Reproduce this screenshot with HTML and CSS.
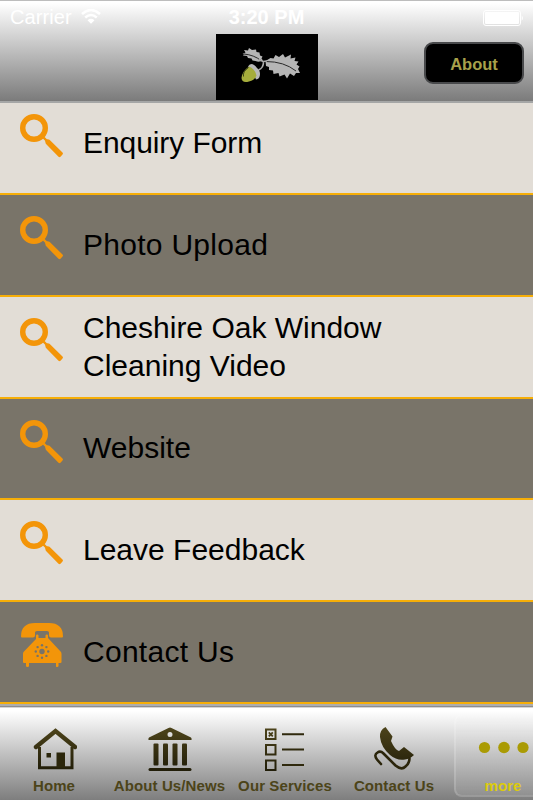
FILE: index.html
```html
<!DOCTYPE html>
<html lang="en">
<head>
<meta charset="utf-8">
<title>More</title>
<link rel="stylesheet" href="styles.css">
</head>
<body>
<svg class="defs" width="0" height="0" aria-hidden="true">
  <symbol id="search" viewBox="0 0 44 44">
    <circle cx="14" cy="14" r="11.3" fill="none" stroke="#f39509" stroke-width="5.4"/>
    <path d="M22 22l6 6" stroke="#f39509" stroke-width="2.4"/>
    <path d="M25.2 27.600q0-2.400 2.600-2.400l1.700.6L42.500 38.500q1 1 0 2l-2 2.300q-1 .8-2 0L25.800 29.800z" fill="#f39509"/>
  </symbol>
</svg>
<div class="app">
  <header class="header">
    <div class="status">
      <div class="carrier">Carrier
        <svg width="20" height="15" viewBox="0 0 20 15" fill="none" stroke="#fff" stroke-width="2.5"><path d="M1 5Q10-3 19 5M4.2 8.5Q10 3.5 15.8 8.5"/><path d="M10 14.8L6.5 11.2Q10 8.3 13.5 11.2Z" fill="#fff" stroke="none"/></svg>
      </div>
      <div class="time">3:20 PM</div>
      <div class="battery"><svg width="41" height="16" viewBox="0 0 41 16"><rect x=".5" y=".5" width="37" height="15" rx="2.5" fill="none" stroke="#fff"/><rect x="2" y="2" width="34" height="12" rx="1" fill="#fff"/><path d="M38.7 5.2q2.4 2.8 0 5.6z" fill="#fff"/></svg></div>
    </div>
    <div class="nav">
      <div class="logo">
        <svg width="102" height="66" viewBox="0 0 102 66">
          <path d="M26.500 20l3-1.500-1.500-2.500 4 .5 1-2.500 3 2 4-.5.500 2.500 3 .5.500 3 2.500 1-1 2 1.500 2q-4 2-7.500.5l-3-.5-1-2-3.500-.5-1-2-4-.5 1-1.500z" fill="#b5b5b5"/>
          <path d="M49.500 27l5-3 3 .5 2-3.500 3.500 2 4-3 2 3.500 6-3-.5 4 5-1-1 3.500 4 .5-2 3 3 2-1.500 2.500 2 4-4 0-2 3-4-2.500-3 5-2.500-4-5 2-1-3.500-5 1-.5-3.500-4-.5 0-3-3-1z" fill="#b5b5b5"/>
          <path d="M28 20q10 1 17 6.500M50 27.500q18 0 30 9.500" fill="none" stroke="#292929" stroke-width="1"/>
          <path d="M43 25.500l4 2 4-.5M47.500 28q0 6-5 8" fill="none" stroke="#aaa" stroke-width="1.600"/>
          <path d="M32 33q1-3 4-3 3 1 5 4 3 2 3 6 0 5-4 5.500-3-8-8-12.500z" fill="#b9b9b9"/>
          <path d="M33 32.500q-7 5-7.500 11.500.5 5.500 7.500 3.500 6-1.500 7.500-6-1-6-7.500-9z" fill="#a6ad3c"/>
          <path d="M32.500 33.500q-6 4-5 9" fill="none" stroke="#394019"/>
        </svg>
      </div>
      <div class="about">About</div>
    </div>
  </header>
  <main class="list">
    <div class="row"><svg class="icon"><use href="#search"/></svg><span class="tight">Enquiry Form</span></div>
    <div class="row"><svg class="icon"><use href="#search"/></svg><span class="loose">Photo Upload</span></div>
    <div class="row"><svg class="icon"><use href="#search"/></svg><span>Cheshire Oak Window<br>Cleaning Video</span></div>
    <div class="row"><svg class="icon"><use href="#search"/></svg><span>Website</span></div>
    <div class="row"><svg class="icon"><use href="#search"/></svg><span>Leave Feedback</span></div>
    <div class="row">
      <svg class="icon" viewBox="0 0 44 44" fill="#f39509">
        <path d="M1 13.500Q1 0 15 0h14q14 0 14 13.500 0 1-1 1H31q-2 0-2-2V9.500q0-1.500-2-1.500H17q-2 0-2 1.500v3q0 2-2 2H2q-1 0-1-1z"/>
        <path d="M16 14v-1.500q0-1 1.200-1t1.300 1V15h7v-2.500q0-1 1.300-1t1.200 1V15l13 14q.5 1 .5 2v8q0 1-1 1h-2v3q0 1-1.500 1T36 43v-3H9v3q0 1-1.500 1T6 43v-3H4q-1 0-1-1v-8q0-1 .5-2L16 16z"/>
        <g fill="#77736a"><circle cx="22" cy="28.500" r="2.700"/><circle cx="22" cy="22.300" r="1.200"/><circle cx="22" cy="34.700" r="1.200"/><circle cx="15.800" cy="28.500" r="1.200"/><circle cx="28.200" cy="28.500" r="1.200"/><circle cx="17.600" cy="24.100" r="1.200"/><circle cx="26.400" cy="24.100" r="1.200"/><circle cx="17.600" cy="32.900" r="1.200"/><circle cx="26.400" cy="32.900" r="1.200"/></g>
      </svg><span class="loose">Contact Us</span></div>
  </main>
  <nav class="tabs">
    <div class="tab">
      <svg viewBox="0 0 44 44" fill="none" stroke="url(#ink)" stroke-width="3"><defs><linearGradient id="ink" gradientUnits="userSpaceOnUse" x1="0" y1="0" x2="0" y2="44"><stop stop-color="#4d441b"/><stop offset="1" stop-color="#211d08"/></linearGradient></defs><path d="M3 20L22.500 4 42 20" stroke-width="4.400" stroke-linecap="round"/><path d="M6.500 20v20.800h32.500V20"/><path d="M23.500 25.500h8.500v15h-8.500zM13.500 26h4.500v4.500h-4.500z" fill="#2b260b" stroke="none"/></svg>
      <span>Home</span>
    </div>
    <div class="tab">
      <svg viewBox="0 0 44 44" fill="url(#ink)"><path fill-rule="evenodd" d="M20.500 1q1.500-1 3 0L43 10.500q1 1 .5 2.500H.5q-.5-1.500.5-2.500zM22 5a2.500 2.500 0 100 5 2.500 2.500 0 100-5z"/><rect x="5.500" y="16.500" width="5" height="22" rx="1"/><rect x="15" y="16.500" width="5" height="22" rx="1"/><rect x="24.500" y="16.500" width="5" height="22" rx="1"/><rect x="34" y="16.500" width="5" height="22" rx="1"/><rect x=".5" y="41" width="43" height="3" rx="1.500"/></svg>
      <span>About Us/News</span>
    </div>
    <div class="tab">
      <svg viewBox="0 0 44 44" fill="none" stroke="url(#ink)" stroke-width="2"><path d="M3 2.500h9.500V12H3zM3 18h9.500v9.500H3zM3 33.500h9.500V43H3z"/><path d="M5.800 5.300l4 4M9.800 5.300l-4 4" stroke-width="1.800"/><path d="M19 6.200h22v2h-22zM19 21.500h22v2h-22zM19 37h22v2h-22z" fill="#2f290d" stroke="none"/></svg>
      <span>Our Services</span>
    </div>
    <div class="tab">
      <svg viewBox="0 0 44 44"><path d="M13.500 0q-6 3-5.500 10 1 10 10 18 7 6 15 4.500 5-.5 9-4.500l-10-8-5 4q-4-1-8-10l1.500-4.500z" fill="url(#ink)"/><path d="M9 37l-4-4.500q-3.500-4.500.5-7 3-2 6 1l12 12q6 5 10 1 4-3 4-8" fill="none" stroke="#2b250b" stroke-width="2.600" stroke-linecap="round"/></svg>
      <span>Contact Us</span>
    </div>
    <div class="tab active">
      <svg class="dots" viewBox="0 0 52 44" fill="#aa9b04"><circle cx="7.500" cy="20.500" r="5.600"/><circle cx="27" cy="20.500" r="5.800"/><circle cx="46" cy="20.500" r="5.600"/></svg>
      <span>more</span>
    </div>
  </nav>
</div>
</body>
</html>
```
FILE: styles.css
```css
* { box-sizing: border-box; }
body { margin: 0; font-family: "Liberation Sans", Arial, sans-serif; }
.defs { display: block; }
.app { width: 533px; height: 800px; overflow: hidden; display: flex; flex-direction: column; }
.header {
  height: 103px;
  flex: none;
  position: relative;
  z-index: 1;
  border-top: 1px solid #bdbdbd;
  border-bottom: 2px solid #a5a6a6;
  background: linear-gradient(#fff 2%, #7b7b7b);
}
.status {
  height: 32px;
  display: grid;
  grid-template-columns: 1fr auto 1fr;
  align-items: center;
  padding: 1px 9px 0;
  color: #fff;
  font-size: 20px;
}
.carrier { padding-left: 1px; letter-spacing: .1px; }
.carrier svg { margin-left: 4px; }
.time { font-weight: bold; }
.battery { justify-self: end; height: 16px; }
.battery svg { display: block; }
.nav {
  display: grid;
  grid-template-columns: 1fr 102px 1fr;
  align-items: start;
  padding: 0 9px;
}
.logo { grid-column: 2; background: #000; height: 66px; margin-top: 1px; }
.logo svg { display: block; }
.about {
  justify-self: end;
  width: 100px;
  height: 42px;
  margin-top: 9px;
  border: 2px solid #48494b;
  border-radius: 9px;
  background: #000;
  color: #a7a14b;
  font-size: 16.5px;
  font-weight: bold;
  line-height: 40px;
  text-align: center;
}
.list {
  flex: none;
  height: 611px;
  margin-top: -10px;
  display: grid;
  grid-template-rows: repeat(6, 1fr);
}
.row {
  display: flex;
  align-items: center;
  padding: 0 20px;
  background: #e2ddd6;
  border-bottom: 2px solid #f6ae08;
  font-size: 30px;
  line-height: 38px;
  color: #000;
}
.row:nth-child(even) { background: #797469; }
.icon { width: 44px; height: 44px; align-self: flex-start; margin: 21px 19px 0 0; flex: none; }
.tight { letter-spacing: -.08px; }
.loose { letter-spacing: .28px; }
.tabs {
  flex: 1;
  display: grid;
  grid-template-columns: 108px 123px 108px 110px 108px;
  padding-top: 4px;
  background:
    linear-gradient(#adadae 2px, #8d8d8e 2px, #8d8d8e 3px, #d5d5d5 3px) 0 0 / 100% 4px no-repeat,
    linear-gradient(#fff 7%, #7b7b7b);
}
.tab {
  display: flex;
  flex-direction: column;
  align-items: center;
  padding-top: 19px;
  font-size: 15px;
  font-weight: bold;
  line-height: 18px;
  color: #4c4419;
}
.tab svg { width: 44px; height: 44px; margin-bottom: 6px; }
.tab:first-child svg { margin-left: 1px; }
.tab span { white-space: nowrap; letter-spacing: .1px; }
.tab.active {
  margin: 7px 5px 5px;
  padding-top: 12px;
  border-radius: 8px;
  border: 2px solid rgba(255, 255, 255, .15);
  border-top: 0;
  background: linear-gradient(rgba(255, 255, 255, .05), rgba(255, 255, 255, .1));
  color: #dccb0c;
}
.tab svg.dots { width: 52px; }
```
